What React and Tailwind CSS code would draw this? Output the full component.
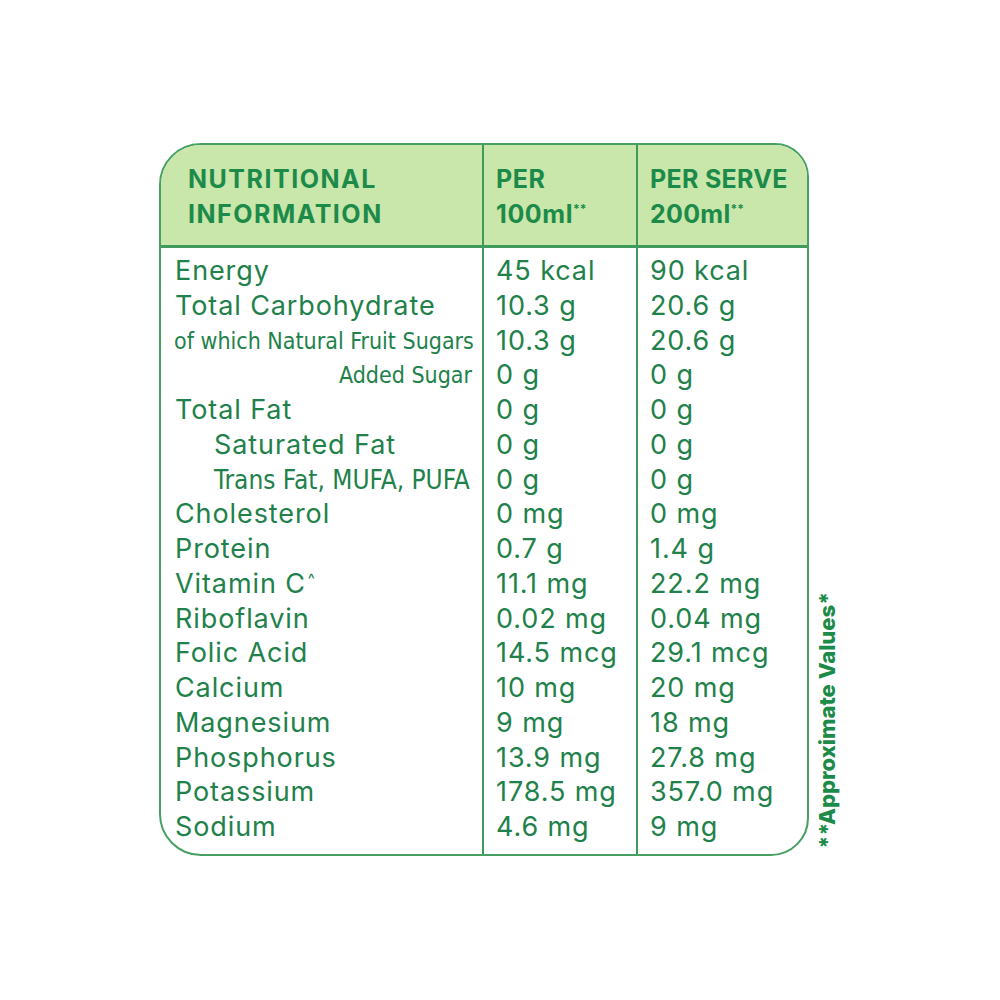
import React from "react";

const rows = [
  { label: "Energy", a: "45 kcal", b: "90 kcal", kind: "main" },
  { label: "Total Carbohydrate", a: "10.3 g", b: "20.6 g", kind: "main" },
  { label: "of which Natural Fruit Sugars", a: "10.3 g", b: "20.6 g", kind: "narrow" },
  { label: "Added Sugar", a: "0 g", b: "0 g", kind: "narrowRight" },
  { label: "Total Fat", a: "0 g", b: "0 g", kind: "main" },
  { label: "Saturated Fat", a: "0 g", b: "0 g", kind: "indent" },
  { label: "Trans Fat, MUFA, PUFA", a: "0 g", b: "0 g", kind: "indentNarrow" },
  { label: "Cholesterol", a: "0 mg", b: "0 mg", kind: "main" },
  { label: "Protein", a: "0.7 g", b: "1.4 g", kind: "main" },
  { label: "Vitamin C", a: "11.1 mg", b: "22.2 mg", kind: "main", caret: true },
  { label: "Riboflavin", a: "0.02 mg", b: "0.04 mg", kind: "main" },
  { label: "Folic Acid", a: "14.5 mcg", b: "29.1 mcg", kind: "main" },
  { label: "Calcium", a: "10 mg", b: "20 mg", kind: "main" },
  { label: "Magnesium", a: "9 mg", b: "18 mg", kind: "main" },
  { label: "Phosphorus", a: "13.9 mg", b: "27.8 mg", kind: "main" },
  { label: "Potassium", a: "178.5 mg", b: "357.0 mg", kind: "main" },
  { label: "Sodium", a: "4.6 mg", b: "9 mg", kind: "main" },
];

function Label({ row }) {
  if (row.kind === "main") {
    return (
      <div className="pl-[14px] text-[27px] tracking-[0.9px] whitespace-nowrap h-[34.75px]">
        {row.label}
        {row.caret && (
          <span className="relative top-[-9px] text-[15px] leading-none ml-[2px]">^</span>
        )}
      </div>
    );
  }
  if (row.kind === "indent") {
    return (
      <div className="pl-[53px] text-[27px] tracking-[0.9px] whitespace-nowrap h-[34.75px]">
        {row.label}
      </div>
    );
  }
  if (row.kind === "narrow") {
    return (
      <div className="pl-[13px] text-[23px] whitespace-nowrap h-[34.75px] font-['Liberation_Sans_Narrow','DejaVu_Sans_Condensed',sans-serif]">
        {row.label}
      </div>
    );
  }
  if (row.kind === "indentNarrow") {
    return (
      <div className="pl-[53px] text-[26px] whitespace-nowrap h-[34.75px] font-['Liberation_Sans_Narrow','DejaVu_Sans_Condensed',sans-serif]">
        {row.label}
      </div>
    );
  }
  return (
    <div className="pr-[10px] text-right text-[23px] whitespace-nowrap h-[34.75px] font-['Liberation_Sans_Narrow','DejaVu_Sans_Condensed',sans-serif]">
      {row.label}
    </div>
  );
}

export default function App() {
  return (
    <div className="w-[1000px] h-[1000px] bg-white flex items-start pt-[143px] pl-[159px] font-['Inter',sans-serif] text-[#21814a]">
      <div className="w-[650px] h-[713px] shrink-0 border-2 border-[#45a061] rounded-tl-[42px] rounded-tr-[34px] rounded-bl-[42px] rounded-br-[38px] overflow-hidden flex flex-col">
        <div className="h-[103px] bg-[#c9e6ab] border-b-[3px] border-[#3f9a5b] grid grid-cols-[321px_154px_1fr] font-bold text-[#1c8b49] text-[25px] leading-[35px]">
          <div className="pl-[27px] pt-[17px] tracking-[1.5px]">
            NUTRITIONAL
            <br />
            INFORMATION
          </div>
          <div className="border-l-2 border-[#3f9a5b] pl-[12px] pt-[17px] tracking-[0.6px]">
            PER
            <br />
            100ml
            <span className="relative top-[-10px] text-[12px] leading-none tracking-normal">**</span>
          </div>
          <div className="border-l-2 border-[#3f9a5b] pl-[12px] pt-[17px] tracking-[0.3px]">
            PER SERVE
            <br />
            200ml
            <span className="relative top-[-10px] text-[12px] leading-none tracking-normal">**</span>
          </div>
        </div>
        <div className="flex-1 grid grid-cols-[321px_154px_1fr]">
          <div className="pt-[6px] leading-[34.75px]">
            {rows.map((r, i) => (
              <Label key={i} row={r} />
            ))}
          </div>
          <div className="border-l-2 border-[#3f9a5b] pt-[6px] pl-[12px] leading-[34.75px] text-[27px] tracking-[0.9px]">
            {rows.map((r, i) => (
              <div key={i} className="whitespace-nowrap h-[34.75px]">{r.a}</div>
            ))}
          </div>
          <div className="border-l-2 border-[#3f9a5b] pt-[6px] pl-[12px] leading-[34.75px] text-[27px] tracking-[0.9px]">
            {rows.map((r, i) => (
              <div key={i} className="whitespace-nowrap h-[34.75px]">{r.b}</div>
            ))}
          </div>
        </div>
      </div>
      <div className="self-end mb-[152px] ml-[5px] [writing-mode:vertical-rl] rotate-180 font-extrabold text-[22px] text-[#1c8b49] leading-[26px] whitespace-nowrap">
        **Approximate Values*
      </div>
    </div>
  );
}
